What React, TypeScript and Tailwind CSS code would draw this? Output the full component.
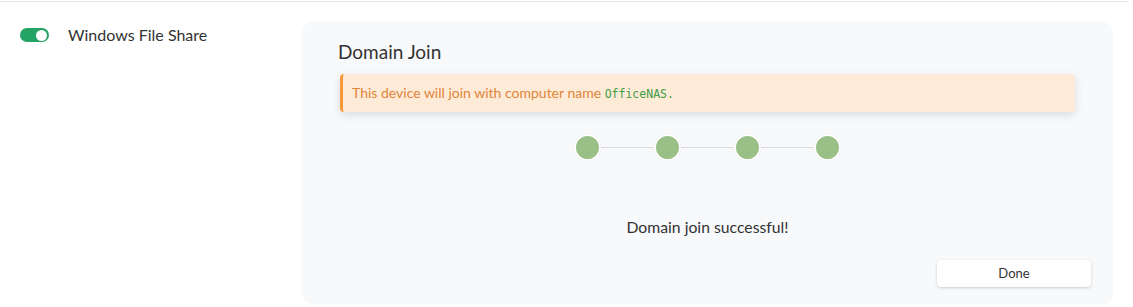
import React from "react";

function Step() {
  return (
    <div className="w-[27px] h-[27px] rounded-full bg-[#9bc087] border-2 border-white shadow-[0_0_1px_rgba(0,0,0,0.15)]" />
  );
}

export default function App() {
  const steps = [0, 1, 2, 3];
  return (
    <div className="w-[1133px] h-[307px] bg-white font-['Lato',sans-serif] text-[#333]">
      <div className="w-[1129px] mt-px border-t border-[#e9e9eb] flex">
        {/* left column */}
        <div className="w-[302px] shrink-0 pl-5 pt-[24px] flex items-start gap-[19px]">
          <div className="mt-[2px] w-[29px] h-[14px] rounded-full bg-[#24a464] flex items-center justify-end pr-[2px]">
            <div className="w-[11px] h-[11px] rounded-full bg-white" />
          </div>
          <span className="text-[16px] leading-[18px]">Windows File Share</span>
        </div>

        {/* panel */}
        <div className="w-[811px] h-[282px] mt-5 rounded-[10px] bg-[#f8f9fb] px-[38px] pt-[18px] flex flex-col">
          <h2 className="text-[19px] leading-6 text-[#333] -ml-[2px]">Domain Join</h2>

          <div className="mt-[10px] h-[38px] rounded-[4px] border-l-[3px] border-[#f7993a] bg-[#feebd7] shadow-[0_3px_8px_rgba(0,0,0,0.12)] flex items-center pl-[9px] text-[14px] text-[#e0853a]">
            <span>
              This device will join with computer name{" "}
              <code className="font-['DejaVu_Sans_Mono',monospace] text-[11.5px] text-[#3f9b45]">OfficeNAS.</code>
            </span>
          </div>

          <div className="mt-[22px] flex items-center justify-center">
            {steps.map((s, i) => (
              <div key={s} className="flex items-center">
                {i > 0 && <div className="w-[53px] h-px bg-[#dcdcdf]" />}
                <Step />
              </div>
            ))}
          </div>

          <p className="mt-[56px] text-center text-[15.75px] leading-5 text-[#333]">Domain join successful!</p>

          <div className="mt-[23px] flex justify-end -mr-[16px]">
            <button className="w-[154px] h-[27px] rounded-[4px] bg-white shadow-[0_1px_3px_rgba(0,0,0,0.18)] text-[13px] text-[#333]">
              Done
            </button>
          </div>
        </div>
      </div>
    </div>
  );
}
